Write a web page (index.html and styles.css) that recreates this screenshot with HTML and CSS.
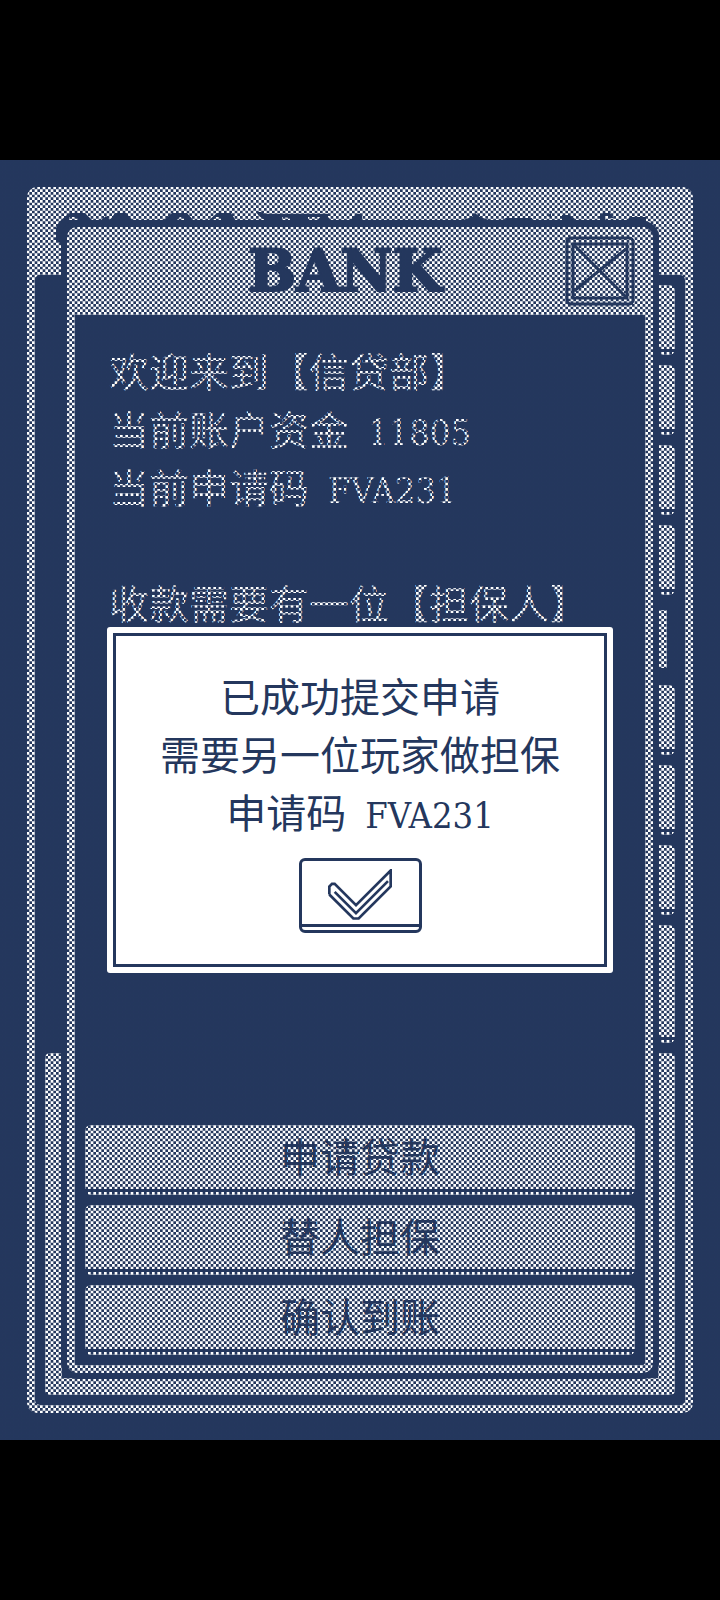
FILE: index.html
```html
<!DOCTYPE html>
<html lang="zh-CN">
<head>
  <meta charset="UTF-8">
  <meta name="viewport" content="width=device-width, initial-scale=1.0">
  <title>BANK</title>
  <link rel="stylesheet" href="styles.css">
</head>
<body>
  <main class="screen">

    <!-- window behind the bank, only its edges are visible -->
    <div class="back" aria-hidden="true">
      <div class="back-header">
        <svg class="back-title" viewBox="0 0 608 32">
          <path d="M6 8H590V14H6Z"/>
          <path fill-rule="evenodd" d="M0 16L3 10L11 3L14 1H29L36 8V13H12L11 32H6L0 29ZM13 5V8H22V7L18 5Z"/>
          <path d="M44 9L50 4L54 8L59 1H70L77 9Z"/>
          <path fill-rule="evenodd" d="M107 9L116 1H131L138 9ZM121 8H128V6L124 5Z"/>
          <path fill-rule="evenodd" d="M152 9L161 1H175L180 9ZM157 8H165V5H160Z"/>
          <path fill-rule="evenodd" d="M200 0H205L209 2H272V5L276 9H210L203 4ZM226 5V8H234V6ZM252 5V8H262L264 5Z"/>
          <path d="M294 9L300 2H306V9ZM404 9L416 5L419 1L424 5L436 9ZM444 9L450 6H476V9ZM491 4L495 1V5ZM506 9V3H513L522 9ZM544 4L547 1H554L558 6H553V4H549V9H544ZM570 9L574 5H590V9Z"/>
        </svg>
      </div>
      <div class="back-body">
        <div class="tabs">
          <span class="plate tab"></span>
          <span class="plate tab"></span>
          <span class="plate tab"></span>
          <span class="plate tab"></span>
          <span class="tab-thin"></span>
          <span class="plate tab"></span>
          <span class="plate tab"></span>
          <span class="plate tab"></span>
          <span class="plate tab tab-tall"></span>
        </div>
        <div class="tray"></div>
      </div>
    </div>

    <section class="bank">
      <header class="bank-header">
        <h1>BANK</h1>
        <button class="close" type="button" aria-label="关闭">
          <svg viewBox="0 0 70 70">
            <rect x="2" y="2" width="66" height="66" rx="4"/>
            <rect x="8" y="8" width="54" height="54"/>
            <path d="M9 9L61 61M61 13L9 55"/>
          </svg>
        </button>
      </header>
      <div class="bank-text">
        <p>欢迎来到【信贷部】</p>
        <p>当前账户资金 <span class="latin">11805</span></p>
        <p>当前申请码 <span class="latin">FVA231</span></p>
        <p class="gap">收款需要有一位【担保人】</p>
      </div>
      <div class="actions">
        <button class="plate action" type="button">申请贷款</button>
        <button class="plate action" type="button">替人担保</button>
        <button class="plate action" type="button">确认到账</button>
      </div>
    </section>

    <div class="dialog" role="dialog" aria-label="已成功提交申请">
      <div class="dialog-inner">
        <p>已成功提交申请</p>
        <p>需要另一位玩家做担保</p>
        <p>申请码 <span class="latin">FVA231</span></p>
        <button class="confirm" type="button" aria-label="确定">
          <svg viewBox="0 0 24 19">
            <path d="M.5 9.5V6.5L1.5 5.5H2.5L10.5 13.5L23.5 .5V6.5L11.5 18.5H9.5L.5 9.5M2.5 8.5L10.5 16.5L22.5 4.5"/>
          </svg>
        </button>
      </div>
    </div>

  </main>
</body>
</html>
```
FILE: styles.css
```css
:root {
  --navy: #24375d;
  --white: #ffffff;
}
* {
  box-sizing: border-box;
}
body {
  margin: 0;
  padding: 160px 0;
  background-color: #000000;
  color: var(--white);
  font-family: 'Noto Sans CJK SC', sans-serif;
  font-size: 40px;
  line-height: 58px;
}
h1, p {
  margin: 0;
}
button {
  font: inherit;
  color: var(--navy);
  border: none;
  padding: 0;
  cursor: pointer;
}
svg {
  display: block;
}
.latin {
  margin-left: 10px;
  font-family: 'DejaVu Serif Condensed', 'DejaVu Serif', serif;
  font-size: 36px;
  line-height: 1;
}

/* the windows share one grid cell and stack on each other */
.screen {
  position: relative;
  display: grid;
  min-height: calc(100vh - 320px);
  background-color: var(--navy);
}
.back, .bank, .dialog {
  grid-area: 1 / 1;
}

/* checker that dims everything under the dialog */
.screen::after {
  content: '';
  position: absolute;
  inset: 0;
  z-index: 1;
  pointer-events: none;
  background-size: 16px 16px;
  background-image: url("data:image/svg+xml,%3Csvg xmlns='http://www.w3.org/2000/svg' width='16' height='16' viewBox='0 0 6 6'%3E%3Cpath fill='%2324375d' d='M1 0h1v1h-1zM3 0h1v1h-1zM5 0h1v1h-1zM0 1h1v1h-1zM2 1h1v1h-1zM4 1h1v1h-1zM1 2h1v1h-1zM3 2h1v1h-1zM5 2h1v1h-1zM0 3h1v1h-1zM2 3h1v1h-1zM4 3h1v1h-1zM1 4h1v1h-1zM3 4h1v1h-1zM5 4h1v1h-1zM0 5h1v1h-1zM2 5h1v1h-1zM4 5h1v1h-1z'/%3E%3C/svg%3E");
}

.back {
  display: flex;
  flex-direction: column;
  margin: 27px;
  border: 8px solid var(--white);
  border-radius: 10px;
  background-color: var(--white);
}
.back-header {
  height: 80px;
  padding: 17px 21px 0;
}
.back-title {
  width: 100%;
  fill: var(--navy);
}
.back-body {
  flex: 1;
  display: flex;
  flex-direction: column;
  padding: 10px;
  border-radius: 5px;
  background-color: var(--navy);
}
.tabs {
  display: flex;
  flex-direction: column;
  align-items: flex-end;
  gap: 10px;
  margin-bottom: 10px;
}
.plate {
  border-radius: 6px;
  background: linear-gradient(to top, var(--white) 3px, var(--navy) 3px 6px, var(--white) 6px);
}
.tab {
  width: 17px;
  height: 70px;
  border-top-left-radius: 0;
}
.tab-tall {
  height: 118px;
}
.tab-thin {
  width: 9px;
  height: 58px;
  margin: 5px 8px 7px 0;
  background-color: var(--white);
}
.tray {
  flex: 1;
  border: 17px solid var(--white);
  border-top: none;
  border-radius: 5px;
}

.bank {
  display: flex;
  flex-direction: column;
  margin: 67px;
  border: 8px solid var(--white);
  border-top: none;
  border-radius: 10px;
  background-color: var(--navy);
  box-shadow: 0 0 0 6px var(--navy);
}
.bank-header {
  display: flex;
  align-items: center;
  height: 88px;
  padding: 0 10px;
  background-color: var(--white);
  color: var(--navy);
}
.bank-header h1 {
  flex: 1;
  padding-left: 40px;
  font-family: 'DejaVu Serif', serif;
  font-size: 57px;
  font-weight: bold;
  text-align: center;
  -webkit-text-stroke: 2px var(--navy);
}
.close {
  width: 70px;
  height: 70px;
  background: none;
}
.close svg {
  fill: none;
  stroke: var(--navy);
  stroke-width: 3;
}
.bank-text {
  flex: 1;
  padding: 26px 34px;
}
.bank-text .gap {
  margin-top: 58px;
}
.actions {
  display: flex;
  flex-direction: column;
  gap: 10px;
  padding: 10px;
}
.action {
  height: 70px;
  padding-bottom: 10px;
}

.dialog {
  align-self: center;
  z-index: 2;
  margin: 0 107px;
  padding: 6px;
  border-radius: 3px;
  background-color: var(--white);
  color: var(--navy);
}
.dialog-inner {
  padding: 30px 0 31px;
  border: 3px solid var(--navy);
  text-align: center;
}
.confirm {
  display: flex;
  justify-content: center;
  width: 123px;
  height: 75px;
  margin: 18px auto 0;
  padding-top: 8px;
  border: 3px solid var(--navy);
  border-radius: 6px;
  background: linear-gradient(to top, var(--white) 3px, var(--navy) 3px 6px, var(--white) 6px);
}
.confirm svg {
  width: 64px;
  height: 51px;
  fill: none;
  stroke: var(--navy);
}
```
